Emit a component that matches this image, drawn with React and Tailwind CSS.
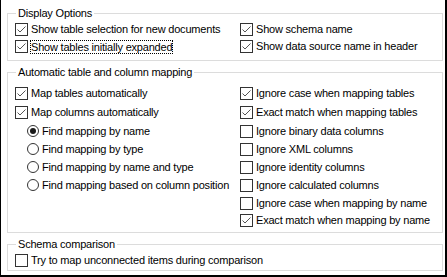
import React from "react";

function Box({ checked }) {
  return (
    <span className="flex-none w-[13px] h-[13px] border border-[#333333] bg-white">
      {checked && (
        <svg width="11" height="11" viewBox="0 0 11 11" className="block">
          <path d="M1.5 5.5 L4 8 L9.5 2.5" stroke="#555555" strokeWidth="1" fill="none" />
        </svg>
      )}
    </span>
  );
}

function Check({ checked, label, focus, h = "h-[18px]" }) {
  return (
    <div className={h + " flex items-center"}>
      <Box checked={checked} />
      {focus ? (
        <span className="ml-[2px] border border-dotted border-black leading-[12px] px-0">{label}</span>
      ) : (
        <span className="ml-[3px]">{label}</span>
      )}
    </div>
  );
}

function Radio({ checked, label, h = "h-[18px]" }) {
  return (
    <div className={h + " flex items-center pl-[12px]"}>
      <span className="flex-none w-[12px] h-[12px] rounded-full border border-[#333333] bg-white flex items-center justify-center">
        {checked && <span className="w-[6px] h-[6px] rounded-full bg-[#1a1a1a]" />}
      </span>
      <span className="ml-[3px]">{label}</span>
    </div>
  );
}

function Group({ title, className, children }) {
  return (
    <fieldset className={"border border-[#dcdcdc] mx-0 " + (className || "")}>
      <legend className="ml-[8px] px-[2px] leading-[13px] h-[13px]">{title}</legend>
      {children}
    </fieldset>
  );
}

export default function App() {
  return (
    <div
      className="w-[447px] h-[277px] bg-white border-l border-r-2 border-b-2 border-black pt-[7px] pl-[6px] pr-[2px] text-[11px] text-black tracking-[-0.2px] leading-[13px] overflow-hidden"
      style={{ fontFamily: '"Liberation Sans", Arial, sans-serif' }}
    >
      <Group title="Display Options" className="h-[54px]">
        <div className="flex pl-[7px] pt-[1px]">
          <div className="w-[225px]">
            <Check checked h="h-[17px]" label="Show table selection for new documents" />
            <Check checked focus h="h-[17px]" label="Show tables initially expanded" />
          </div>
          <div>
            <Check checked h="h-[17px]" label="Show schema name" />
            <Check checked h="h-[17px]" label="Show data source name in header" />
          </div>
        </div>
      </Group>

      <Group title="Automatic table and column mapping" className="mt-[5px] h-[167px]">
        <div className="flex pl-[7px] pt-[5px]">
          <div className="w-[225px]">
            <Check checked h="h-[19px]" label="Map tables automatically" />
            <Check checked h="h-[19px]" label="Map columns automatically" />
            <Radio checked label="Find mapping by name" />
            <Radio label="Find mapping by type" />
            <Radio label="Find mapping by name and type" />
            <Radio label="Find mapping based on column position" />
          </div>
          <div>
            <Check checked h="h-[19px]" label="Ignore case when mapping tables" />
            <Check checked h="h-[19px]" label="Exact match when mapping tables" />
            <Check label="Ignore binary data columns" />
            <Check label="Ignore XML columns" />
            <Check label="Ignore identity columns" />
            <Check label="Ignore calculated columns" />
            <Check label="Ignore case when mapping by name" />
            <Check checked h="h-[17px]" label="Exact match when mapping by name" />
          </div>
        </div>
      </Group>

      <Group title="Schema comparison" className="mt-[5px] h-[33px]">
        <div className="pl-[7px] pt-[0px]">
          <Check label="Try to map unconnected items during comparison" />
        </div>
      </Group>
    </div>
  );
}
